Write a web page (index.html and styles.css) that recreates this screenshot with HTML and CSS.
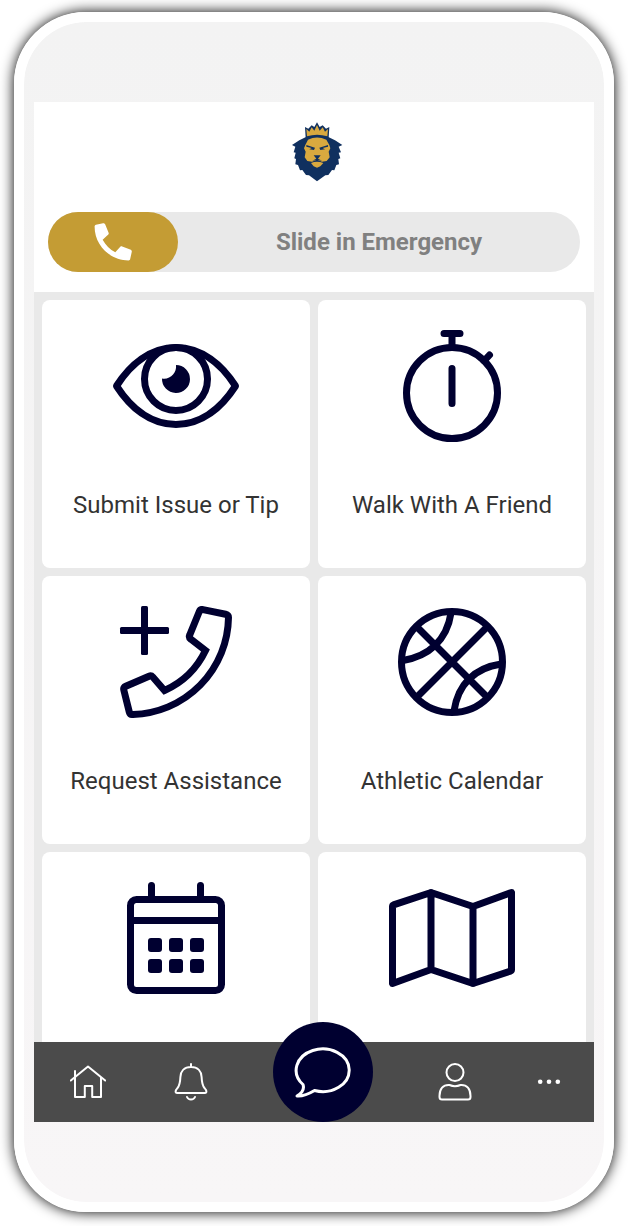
FILE: index.html
```html
<!DOCTYPE html>
<html lang="en">
<head>
<meta charset="utf-8">
<meta name="viewport" content="width=device-width, initial-scale=1">
<title>Campus Safety</title>
<link rel="stylesheet" href="styles.css">
</head>
<body>
<div class="phone">
  <main class="screen">
    <header class="header">
      <svg class="logo" viewBox="-12 0 228 228" role="img" aria-label="Lion crest">
        <path fill="#10305f" d="M78 66 L58 76 L36 90 L46 95 L41 112 L47 113 L43 130 L48 132 L46 148 L54 150 L60 166 L67 165 L78 180 L87 181 L111 199 L136 181 L145 180 L156 165 L163 166 L169 150 L177 148 L175 132 L181 130 L176 113 L183 112 L176 95 L187 90 L165 76 L145 66 Z"/>
        <path fill="#10305f" d="M75 36 L85 41 L95 31 L103 36 L111 22 L119 36 L128 31 L138 41 L148 36 L146 68 L77 68 Z"/>
        <path fill="#d9a93f" d="M79 42 L88 50 L95 37 L103 47 L111 30 L119 47 L128 37 L135 50 L144 42 L142 64 Q111 54 81 64 Z"/>
        <path fill="#d9a93f" d="M84 74 Q111 61 139 74 L148 90 L151 100 L146 110 L149 127 L140 138 L126 140 L111 134 L96 140 L82 138 L74 127 L77 110 L72 100 L76 90 Z"/>
        <path fill="#d9a93f" d="M93 144 Q111 136 130 144 L121 154 L111 158 L101 154 Z"/>
        <path fill="#10305f" d="M79 90 L105 98 L102 105 L88 103 L95 99 L79 95 Z M144 90 L118 98 L121 105 L135 103 L128 99 L144 95 Z M101 121 H122 L114 131 L126 137 L111 135 L97 137 L109 131 Z"/>
      </svg>
      <div class="slider">
        <input class="slider-input" id="emergency" type="range" min="0" max="100" value="0">
        <svg class="slider-icon" viewBox="0 0 24 24" aria-hidden="true"><path d="M6.600 10.800c1.500 2.800 3.800 5.100 6.600 6.600l2.600-2.900c.3-.3.7-.3 1-.2l4.500 1.800c.4.2.6.6.5 1l-.8 3.700c-.1.500-.4.800-.9.800C10.400 21.600 2.400 13.700 2.400 3.900c0-.4.3-.8.700-.9l3.700-.8c.4-.1.900.1 1.100.6l1.800 4.400c.2.400 0 .8-.3 1z"/></svg>
        <label class="slider-label" for="emergency">Slide in Emergency</label>
      </div>
    </header>

    <section class="tiles">
      <button class="tile" type="button">
        <svg class="tile-icon" viewBox="0 0 140 112" aria-hidden="true">
          <path d="M10.500 56C24 35 44 17.500 70 17.500S116 35 129.500 56C116 77 96 94.500 70 94.500S24 77 10.500 56Z"/>
          <circle cx="70" cy="49" r="31.500"/>
          <path class="solid" d="M70 35A14 14 0 1 1 56 48.500C64 50 71 43 70 35Z"/>
        </svg>
        <span class="tile-label">Submit Issue or Tip</span>
      </button>
      <button class="tile" type="button">
        <svg class="tile-icon" viewBox="0 0 140 112" aria-hidden="true">
          <circle cx="70" cy="63" r="45.500"/>
          <path d="M62 3.500H78M70 3.500V17M70 38.500V73.500M107.500 25L102 31"/>
        </svg>
        <span class="tile-label">Walk With A Friend</span>
      </button>
      <button class="tile" type="button">
        <svg class="tile-icon" viewBox="0 0 140 112" aria-hidden="true">
          <rect class="solid" x="35" y="0" width="7" height="49" rx="1.500"/>
          <rect class="solid" x="14" y="21" width="49" height="7" rx="1.500"/>
          <path stroke-linejoin="miter" d="M97 3.600L119.500 8.200Q122.500 9 122.500 11.500A98.500 98.500 0 0 1 27 108.500Q24 108.700 23.300 106L17.800 84Q17.200 81.500 19.800 80.300L43 70.200Q45.200 69.200 46.800 71L58.500 84.500A83 83 0 0 0 99.500 44.500L85 33.300Q82.500 31.500 83.800 28.800L93.300 5.500Q94.300 3 97 3.600Z"/>
        </svg>
        <span class="tile-label">Request Assistance</span>
      </button>
      <button class="tile" type="button">
        <svg class="tile-icon" viewBox="0 0 140 112" aria-hidden="true">
          <circle cx="70" cy="56" r="50.500"/>
          <path d="M35 21L105 91M105 21L35 91M69 7Q66 27 53 39.500Q41 51 21 54.500M119 58Q99 61 87 73Q75 85 72 105"/>
        </svg>
        <span class="tile-label">Athletic Calendar</span>
      </button>
      <button class="tile" type="button" aria-label="Calendar">
        <svg class="tile-icon" viewBox="0 0 140 112" aria-hidden="true">
          <rect x="24.500" y="17.500" width="91" height="91" rx="6"/>
          <path d="M24.500 38.500H115.500M45.500 3.500V17M94.500 3.500V17"/>
          <g class="solid">
            <rect x="42" y="56" width="14" height="14" rx="3"/><rect x="63" y="56" width="14" height="14" rx="3"/><rect x="84" y="56" width="14" height="14" rx="3"/>
            <rect x="42" y="77" width="14" height="14" rx="3"/><rect x="63" y="77" width="14" height="14" rx="3"/><rect x="84" y="77" width="14" height="14" rx="3"/>
          </g>
        </svg>
      </button>
      <button class="tile" type="button" aria-label="Map">
        <svg class="tile-icon" viewBox="0 0 140 112" aria-hidden="true">
          <path d="M10.500 101.500V24.500Q10.500 23.300 11.500 22.900L49 10.500L91 24.500L129.500 10.500V87.500Q129.500 88.700 128.500 89.100L91 101.500L49 87.500ZM49 10.500V87.500M91 24.500V101.500"/>
        </svg>
      </button>
    </section>

    <nav class="nav" aria-label="Main">
      <button class="nav-item" type="button" aria-label="Home">
        <svg class="nav-icon" viewBox="0 0 36 40"><path d="M.8 18.500L18 4.500L35.200 18.500M5 9V35H14.800V24H22.200V35H31V15"/></svg>
      </button>
      <button class="nav-item" type="button" aria-label="Notifications">
        <svg class="nav-icon" viewBox="0 0 36 40"><path d="M18 2V5M18 5C11 5 7.600 9.500 7.400 15C7.200 20 7 23 4.500 26L3 28Q1.700 31 4.500 31H31.500Q34.300 31 33 28L31.500 26C29 23 28.800 20 28.600 15C28.400 9.500 25 5 18 5ZM14 35Q15 37.500 18 37.500T22 35"/></svg>
      </button>
      <button class="chat" type="button" aria-label="Chat">
        <svg class="chat-icon" viewBox="-2 -1 60 52"><path d="M2 49C7 46 9.500 42 8 37.500A26.500 21.300 0 1 1 19.500 43.500C14.500 46.500 8 49.500 2 49Z"/></svg>
      </button>
      <button class="nav-item" type="button" aria-label="Profile">
        <svg class="nav-icon" viewBox="0 0 36 40"><circle cx="18" cy="10.500" r="8.500"/><path d="M12.500 23C6 22.500 2.500 27 2.500 34V35Q2.500 37.500 5 37.500H31Q33.500 37.500 33.500 35V34C33.500 27 30 22.500 23.500 23Q18 25.500 12.500 23Z"/></svg>
      </button>
      <button class="nav-item" type="button" aria-label="More">
        <svg class="nav-icon" viewBox="0 0 36 40"><g class="dots"><circle cx="9.200" cy="19.700" r="2.300"/><circle cx="18" cy="19.700" r="2.300"/><circle cx="26.800" cy="19.700" r="2.300"/></g></svg>
      </button>
    </nav>
  </main>
</div>
</body>
</html>
```
FILE: styles.css
```css
* {
  box-sizing: border-box;
}

body {
  margin: 0;
  padding: 12px 14px 14px;
  height: 100vh;
  background: #fff;
  font-family: Roboto, "Liberation Sans", sans-serif;
}

button {
  border: 0;
  padding: 0;
  font: inherit;
  cursor: pointer;
}

svg {
  display: block;
}

.phone {
  height: 100%;
  padding: 80px 10px;
  border: 10px solid #fff;
  border-radius: 72px;
  background: linear-gradient(#f3f3f3, #f8f6f7) padding-box;
  box-shadow: 0 0 14px #000;
}

.screen {
  display: flex;
  flex-direction: column;
  height: 100%;
  background: #e9e9e9;
}

.header {
  display: flex;
  flex-direction: column;
  gap: 21px;
  padding: 13px 14px 20px;
  background: #fff;
}

.logo {
  align-self: center;
  width: 76px;
  height: 76px;
}

.slider {
  display: grid;
  grid-template-columns: 130px 1fr;
  align-items: center;
  justify-items: center;
}

.slider-input {
  grid-area: 1 / 1 / 2 / 3;
  width: 100%;
  height: 60px;
  margin: 0;
  border-radius: 30px;
  background: #e9e9e9;
  appearance: none;
}

.slider-input::-webkit-slider-thumb {
  width: 130px;
  height: 60px;
  border-radius: 30px;
  background: #c49c34;
  appearance: none;
}

.slider-icon {
  grid-area: 1 / 1;
  width: 46px;
  height: 46px;
  fill: #fff;
  pointer-events: none;
}

.slider-label {
  grid-area: 1 / 2;
  color: #808080;
  font-size: 24px;
  font-weight: 700;
  line-height: 28px;
  pointer-events: none;
}

.tiles {
  display: grid;
  flex: 1;
  grid-template-columns: 1fr 1fr;
  grid-auto-rows: 268px;
  gap: 8px;
  min-height: 0;
  padding: 8px 8px 0;
  overflow: hidden;
}

.tile {
  display: flex;
  flex-direction: column;
  align-items: center;
  gap: 48px;
  padding-top: 30px;
  border-radius: 8px;
  background: #fff;
}

.tile-icon {
  width: 140px;
  height: 112px;
  fill: none;
  stroke: #000030;
  stroke-width: 7;
  stroke-linecap: round;
  stroke-linejoin: round;
}

.tile-icon .solid {
  fill: #000030;
  stroke: none;
}

.tile-label {
  color: #333;
  font-size: 24px;
  line-height: 30px;
}

.nav {
  display: grid;
  grid-template-rows: 80px;
  grid-template-columns: 108fr 98fr 166fr 98fr 90fr;
  align-items: center;
  justify-items: center;
  background: #4b4b4b;
}

.nav-item {
  background: none;
}

.nav-icon {
  width: 36px;
  height: 40px;
  fill: none;
  stroke: #fff;
  stroke-width: 2;
  stroke-linecap: round;
  stroke-linejoin: round;
}

.dots {
  fill: #fff;
  stroke: none;
}

.chat {
  display: grid;
  align-self: end;
  place-items: center;
  width: 100px;
  height: 100px;
  border-radius: 50%;
  background: #000030;
}

.chat-icon {
  width: 60px;
  height: 52px;
  fill: none;
  stroke: #fff;
  stroke-width: 3;
  stroke-linejoin: round;
}
```
